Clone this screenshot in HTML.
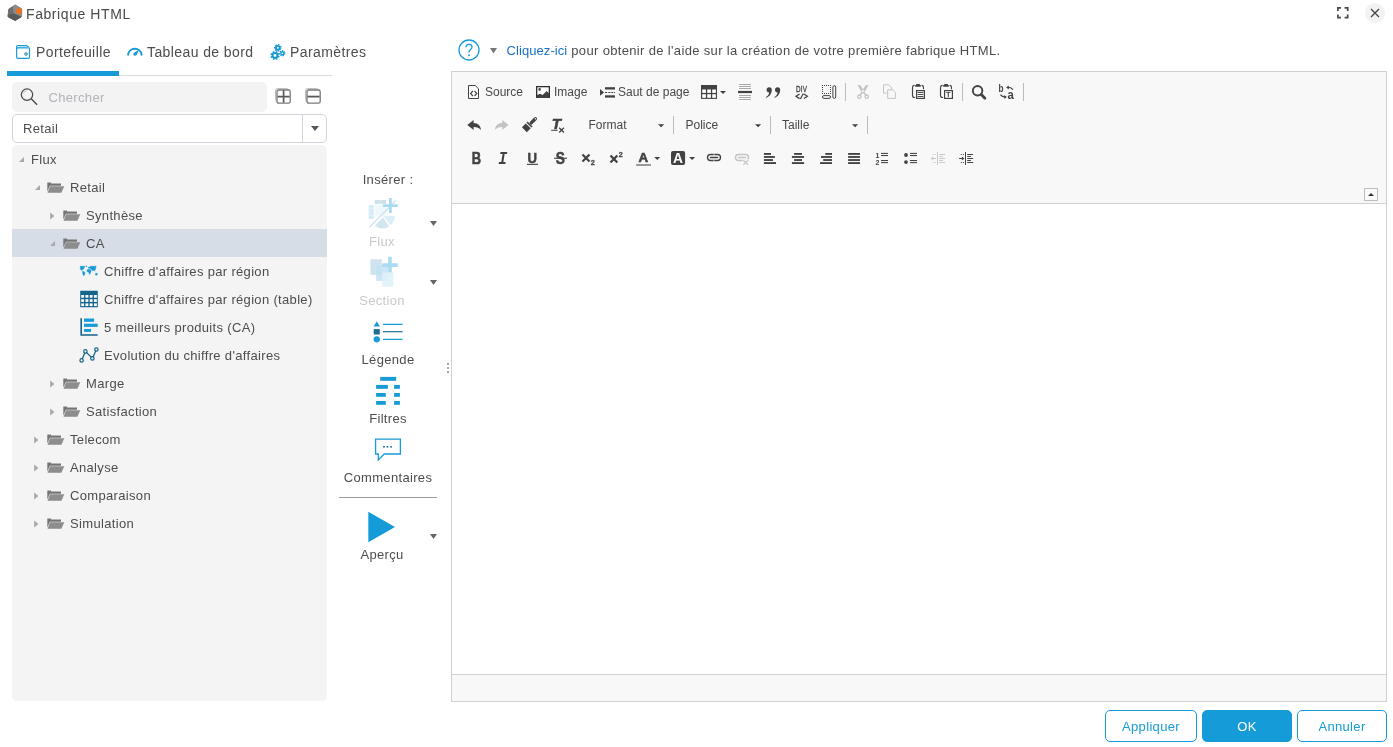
<!DOCTYPE html>
<html lang="fr">
<head>
<meta charset="utf-8">
<title>Fabrique HTML</title>
<style>
*{box-sizing:border-box;margin:0;padding:0}
html,body{width:1393px;height:747px;overflow:hidden;background:#fff}
body{position:relative;font-family:"Liberation Sans",sans-serif;font-size:13px;color:#4d4d4d;letter-spacing:.33px}
#app{position:absolute;left:0;top:0;width:1393px;height:747px;will-change:transform}
.abs{position:absolute}
svg{position:absolute;overflow:visible}
.t{position:absolute;white-space:nowrap;line-height:16px}
/* title */
#title{left:26px;top:6px;font-size:14px;letter-spacing:.58px;color:#4a4a4a}
/* tabs */
.tab{font-size:14px;letter-spacing:.4px;top:44px;color:#4d4d4d}
#tabbar{left:7px;top:71px;width:112px;height:5px;background:#159bd7}
#tabline{left:119px;top:75px;width:213px;height:1px;background:#dcdcdc}
/* search */
#search{left:12px;top:82px;width:255px;height:30px;background:#f3f3f3;border-radius:5px}
#combo{left:12px;top:114px;width:315px;height:29px;border:1px solid #d1d4da;border-radius:5px;background:#fff}
#combo i{position:absolute;left:289px;top:0;width:1px;height:27px;background:#d1d4da}
#combo b{position:absolute;left:298px;top:11px;border:4px solid transparent;border-top:5px solid #555;border-bottom:0}
/* tree */
#tree{left:12px;top:145px;width:315px;height:556px;background:#f4f4f4;border-radius:5px}
#sel{left:12px;top:229px;width:315px;height:28px;background:#d6dde7}
.row{position:absolute;white-space:nowrap;line-height:16px;height:16px;color:#4d4d4d}
.ar{position:absolute;width:0;height:0}
.ar.c{border:3.5px solid transparent;border-left:5px solid #a9a9a9;border-right:0}
.ar.o{border:3px solid transparent;border-right-color:#a9a9a9;border-bottom-color:#a9a9a9}
/* insert */
.ins{position:absolute;white-space:nowrap;line-height:16px;text-align:center;width:120px;left:328px}
.dd{position:absolute;border:4px solid transparent;border-top:5px solid #666;border-bottom:0}
/* editor */
#ed{left:451px;top:71px;width:936px;height:631px;border:1px solid #d1d1d1;background:#fff}
#tb{left:0;top:0;width:934px;height:132px;background:#f8f8f8;border-bottom:1px solid #d1d1d1}
#bb{left:0;top:602px;width:934px;height:27px;background:#f8f8f8;border-top:1px solid #d1d1d1}
.ck{position:absolute;font-size:12px;letter-spacing:0;color:#484848;line-height:14px;white-space:nowrap}
.sep{position:absolute;width:1px;height:16px;background:#bcbcbc}
.cdd{position:absolute;border:3px solid transparent;border-top:3px solid #484848;border-bottom:0}
/* buttons */
.btn{position:absolute;top:710px;height:32px;border:1px solid #159bd7;border-radius:5px;color:#159bd7;font-size:13px;letter-spacing:.33px;text-align:center;line-height:30px;padding-top:1px;background:#fff}
</style>
</head>
<body>
<div id="app">
<!-- TITLE -->
<svg style="left:7px;top:4px" width="16" height="17" viewBox="7 4 16 17">
<path d="M15.2 5.100L21.500 8.900V16.400L15.200 20.400L8 16.500L8.800 9.100Z" fill="#6d6e70" stroke="#6d6e70" stroke-width="1" stroke-linejoin="round"/>
<path d="M13.300 6.200L15.200 5L21.600 8.900V16.400L21 17L14 13.800Z" fill="#8b8d8f" stroke="#8b8d8f" stroke-width=".8" stroke-linejoin="round"/>
<path d="M8 15.400L14 13.800L21.100 17L15.200 20.500L8.300 17Z" fill="#595a5c" stroke="#595a5c" stroke-width=".8" stroke-linejoin="round"/>
<path d="M19.200 7.900L21.800 9.400V12.600L19.200 14.200L16.400 12.600V9.400Z" fill="#f07122" stroke="#f07122" stroke-width=".6" stroke-linejoin="round"/>
</svg>
<svg style="left:1336px;top:6px" width="14" height="14" viewBox="0 0 14 14">
<path d="M1.900 5V1.900H5M8.600 1.900H11.700V5M11.700 8.500V11.600H8.600M5 11.600H1.900V8.500" fill="none" stroke="#4a4a4a" stroke-width="1.700"/>
</svg>
<div class="abs" style="left:1365px;top:3px;width:20px;height:20px;border-radius:10px;background:#f2f2f2"></div>
<svg style="left:1365px;top:3px" width="20" height="20" viewBox="0 0 20 20">
<path d="M6 6L14 14M14 6L6 14" fill="none" stroke="#444" stroke-width="1.300"/>
</svg>

<div class="t" id="title">Fabrique HTML</div>

<!-- TABS -->
<svg style="left:15px;top:44px" width="16" height="16" viewBox="15 44 16 16">
<path d="M17 48.900q.2-1.700 2-1.700h8.300l1.500 1.700z" fill="#8fd3f0"/>
<path d="M17.700 45.500h8.300q.9 0 1.500.7l1.400 1.500q.6.600.6 1.500v8q0 1.100-1.100 1.100h-10.700q-1.100 0-1.100-1.100v-10.600q0-1.100 1.100-1.100z" fill="none" stroke="#189ad6" stroke-width="1.150"/>
<path d="M16.800 49.200q.2-2 2.200-2h8.700" fill="none" stroke="#189ad6" stroke-width="1"/>
<circle cx="26" cy="54" r="1.300" fill="#cfe6f2" stroke="#2b87b3" stroke-width="1"/>
</svg>
<svg style="left:126px;top:46px" width="18" height="12" viewBox="126 46 18 12">
<path d="M128.100 54.700A6.800 6.800 0 0 1 141.600 54.700" fill="none" stroke="#189ad6" stroke-width="2" stroke-linecap="round"/>
<path d="M139.200 49.500L136.800 54.500Q135.700 56.200 134.100 55.400Q132.700 54.400 133.700 52.900Z" fill="#189ad6"/>
</svg>
<svg style="left:269px;top:43px" width="18" height="18" viewBox="269 43 18 18">
<circle cx="277.8" cy="47.8" r="1.95" fill="none" stroke="#189ad6" stroke-width="1.80"/><circle cx="277.8" cy="47.8" r="3.15" fill="none" stroke="#189ad6" stroke-width="1.40" stroke-dasharray="1.470 1.357" transform="rotate(10 277.8 47.8)"/><circle cx="275" cy="55.5" r="2.45" fill="none" stroke="#189ad6" stroke-width="2.00"/><circle cx="275" cy="55.5" r="3.83" fill="none" stroke="#189ad6" stroke-width="1.55" stroke-dasharray="1.562 1.442" transform="rotate(5 275 55.5)"/><circle cx="282.3" cy="53.25" r="1.55" fill="none" stroke="#189ad6" stroke-width="1.40"/><circle cx="282.3" cy="53.25" r="2.52" fill="none" stroke="#189ad6" stroke-width="1.35" stroke-dasharray="1.179 1.088" transform="rotate(0 282.3 53.25)"/>
</svg>

<div class="t tab" style="left:36px">Portefeuille</div>
<div class="t tab" style="left:147px">Tableau de bord</div>
<div class="t tab" style="left:290px">Paramètres</div>
<div class="abs" id="tabline"></div>
<div class="abs" id="tabbar"></div>

<!-- SEARCH -->
<div class="abs" id="search"></div>
<div class="t" style="left:48.500px;top:90px;color:#b3b3ba">Chercher</div>
<div class="abs" id="combo"><i></i><b></b></div>
<div class="t" style="left:23px;top:121px">Retail</div>

<svg style="left:20px;top:87px" width="19" height="19" viewBox="20 87 19 19">
<circle cx="27" cy="94.600" r="5.700" fill="none" stroke="#4a4a4a" stroke-width="1.250"/>
<path d="M31.200 98.700L37.100 104.700" stroke="#4a4a4a" stroke-width="1.400" fill="none"/>
<path d="M23.300 93.500A4 4 0 0 1 26.300 90.700" stroke="#b5b5b5" stroke-width=".8" fill="none"/>
</svg>
<svg style="left:275px;top:88px" width="16" height="16" viewBox="0 0 16 16">
<rect x=".6" y=".6" width="12.800" height="12.800" rx="1.800" fill="#e9e9e9" stroke="#b9b9b9" stroke-width="1"/>
<rect x="2" y="2" width="13.200" height="13.200" rx="1.800" fill="#fdfdfd" stroke="#7a7a7a" stroke-width="1.300"/>
<path d="M2.600 8.600H14.600M8.600 2.600V14.600" stroke="#585858" stroke-width="1.700" fill="none"/>
</svg>
<svg style="left:305px;top:88px" width="16" height="16" viewBox="0 0 16 16">
<rect x=".6" y=".6" width="12.800" height="12.800" rx="1.800" fill="#e9e9e9" stroke="#b9b9b9" stroke-width="1"/>
<rect x="2" y="2" width="13.200" height="13.200" rx="1.800" fill="#fdfdfd" stroke="#7a7a7a" stroke-width="1.300"/>
<path d="M2.600 8.600H14.600" stroke="#585858" stroke-width="1.800" fill="none"/>
</svg>

<!-- TREE -->
<div class="abs" id="tree"></div>
<div class="abs" id="sel"></div>
<div id="rows">
<svg style="left:19px;top:157.0px" width="5" height="5" viewBox="0 0 5 5"><path d="M5 0V5H0z" fill="#a8a8a8"/></svg>
<div class="row" style="left:31px;top:152px">Flux</div>
<svg style="left:35px;top:185.0px" width="5" height="5" viewBox="0 0 5 5"><path d="M5 0V5H0z" fill="#a8a8a8"/></svg>
<svg style="left:47.3px;top:182.0px" width="18" height="11" viewBox="0 0 18 11"><path d="M0.3 0.4h3.4l0.7 1.1h9.6v2.3H2.9L0.3 9.6z" fill="#767676"/><path d="M3.1 4.2h14.2l-2.9 6.6H0.5z" fill="#8d8d8d"/></svg>
<div class="row" style="left:70px;top:180px">Retail</div>
<svg style="left:50px;top:211.5px" width="5" height="8" viewBox="0 0 5 8"><path d="M0.2 0.4L4.4 4L0.2 7.6z" fill="#a8a8a8"/></svg>
<svg style="left:63.3px;top:210.0px" width="18" height="11" viewBox="0 0 18 11"><path d="M0.3 0.4h3.4l0.7 1.1h9.6v2.3H2.9L0.3 9.6z" fill="#767676"/><path d="M3.1 4.2h14.2l-2.9 6.6H0.5z" fill="#8d8d8d"/></svg>
<div class="row" style="left:86px;top:208px">Synthèse</div>
<svg style="left:50px;top:241.0px" width="5" height="5" viewBox="0 0 5 5"><path d="M5 0V5H0z" fill="#a8a8a8"/></svg>
<svg style="left:63.3px;top:238.0px" width="18" height="11" viewBox="0 0 18 11"><path d="M0.3 0.4h3.4l0.7 1.1h9.6v2.3H2.9L0.3 9.6z" fill="#767676"/><path d="M3.1 4.2h14.2l-2.9 6.6H0.5z" fill="#8d8d8d"/></svg>
<div class="row" style="left:86px;top:236px">CA</div>
<svg style="left:79px;top:264px" width="20" height="14" viewBox="79 264 20 14"><g fill="#189ad6" stroke="#189ad6" stroke-width=".5" stroke-linejoin="round"><path d="M80.200 266.300L84.700 266.300L83.900 268.500L81.900 270.500L80.500 269.300Z"/><circle cx="86.300" cy="266.300" r=".5"/><path d="M82.400 271.600L83.900 271.400L85.200 273L83.900 275.700L83.200 275.200Z"/><path d="M87.900 267.700L91 266.300L96.200 266.300L95 270.400L92 270.200L90.700 268.800Z"/><path d="M87 270L88.400 269.200L90.900 270L90.900 272.100L89.500 274.500L88.700 272.100L87 271.500Z"/><path d="M94.900 274.300L97.100 273.100L97.300 274.900L96.300 275.200Z"/><path d="M94.600 271.300L96.400 272.600" stroke="#a8d8ef" stroke-width=".9"/></g></svg>
<div class="row" style="left:104px;top:264px">Chiffre d'affaires par région</div>
<svg style="left:79px;top:289px" width="20" height="20" viewBox="79 289 20 20"><rect x="80.200" y="290.700" width="17.600" height="16.600" rx=".6" fill="#15648c"/><rect x="81.20" y="295.00" width="2.900" height="2.700" fill="#fff"/><rect x="85.45" y="295.00" width="2.900" height="2.700" fill="#fff"/><rect x="89.70" y="295.00" width="2.900" height="2.700" fill="#fff"/><rect x="93.95" y="295.00" width="2.900" height="2.700" fill="#fff"/><rect x="81.20" y="299.20" width="2.900" height="2.700" fill="#fff"/><rect x="85.45" y="299.20" width="2.900" height="2.700" fill="#fff"/><rect x="89.70" y="299.20" width="2.900" height="2.700" fill="#fff"/><rect x="93.95" y="299.20" width="2.900" height="2.700" fill="#fff"/><rect x="81.20" y="303.40" width="2.900" height="2.700" fill="#fff"/><rect x="85.45" y="303.40" width="2.900" height="2.700" fill="#fff"/><rect x="89.70" y="303.40" width="2.900" height="2.700" fill="#fff"/><rect x="93.95" y="303.40" width="2.900" height="2.700" fill="#fff"/></svg>
<div class="row" style="left:104px;top:292px">Chiffre d'affaires par région (table)</div>
<svg style="left:79px;top:317px" width="20" height="20" viewBox="79 317 20 20"><path d="M81.200 318.200V335H97.700" fill="none" stroke="#15648c" stroke-width="1.600"/><rect x="84" y="318.500" width="10.100" height="3.300" fill="#159bd7"/><rect x="84" y="323.700" width="13.700" height="3.200" fill="#159bd7"/><rect x="84" y="329" width="7" height="2.900" fill="#159bd7"/></svg>
<div class="row" style="left:104px;top:320px">5 meilleurs produits (CA)</div>
<svg style="left:79px;top:346px" width="20" height="18" viewBox="79 346 20 18"><path d="M81.600 360.400L85.400 351.400L92.400 358.400L96.400 349.500" fill="none" stroke="#15648c" stroke-width="1.250"/><g fill="#f4f4f4" stroke="#15648c" stroke-width="1.200"><circle cx="81.600" cy="360.400" r="1.700"/><circle cx="85.400" cy="351.400" r="1.700"/><circle cx="92.400" cy="358.400" r="1.700"/><circle cx="96.400" cy="349.500" r="1.700"/></g></svg>
<div class="row" style="left:104px;top:348px">Evolution du chiffre d'affaires</div>
<svg style="left:50px;top:379.5px" width="5" height="8" viewBox="0 0 5 8"><path d="M0.2 0.4L4.4 4L0.2 7.6z" fill="#a8a8a8"/></svg>
<svg style="left:63.3px;top:378.0px" width="18" height="11" viewBox="0 0 18 11"><path d="M0.3 0.4h3.4l0.7 1.1h9.6v2.3H2.9L0.3 9.6z" fill="#767676"/><path d="M3.1 4.2h14.2l-2.9 6.6H0.5z" fill="#8d8d8d"/></svg>
<div class="row" style="left:86px;top:376px">Marge</div>
<svg style="left:50px;top:407.5px" width="5" height="8" viewBox="0 0 5 8"><path d="M0.2 0.4L4.4 4L0.2 7.6z" fill="#a8a8a8"/></svg>
<svg style="left:63.3px;top:406.0px" width="18" height="11" viewBox="0 0 18 11"><path d="M0.3 0.4h3.4l0.7 1.1h9.6v2.3H2.9L0.3 9.6z" fill="#767676"/><path d="M3.1 4.2h14.2l-2.9 6.6H0.5z" fill="#8d8d8d"/></svg>
<div class="row" style="left:86px;top:404px">Satisfaction</div>
<svg style="left:34px;top:435.5px" width="5" height="8" viewBox="0 0 5 8"><path d="M0.2 0.4L4.4 4L0.2 7.6z" fill="#a8a8a8"/></svg>
<svg style="left:47.3px;top:434.0px" width="18" height="11" viewBox="0 0 18 11"><path d="M0.3 0.4h3.4l0.7 1.1h9.6v2.3H2.9L0.3 9.6z" fill="#767676"/><path d="M3.1 4.2h14.2l-2.9 6.6H0.5z" fill="#8d8d8d"/></svg>
<div class="row" style="left:70px;top:432px">Telecom</div>
<svg style="left:34px;top:463.5px" width="5" height="8" viewBox="0 0 5 8"><path d="M0.2 0.4L4.4 4L0.2 7.6z" fill="#a8a8a8"/></svg>
<svg style="left:47.3px;top:462.0px" width="18" height="11" viewBox="0 0 18 11"><path d="M0.3 0.4h3.4l0.7 1.1h9.6v2.3H2.9L0.3 9.6z" fill="#767676"/><path d="M3.1 4.2h14.2l-2.9 6.6H0.5z" fill="#8d8d8d"/></svg>
<div class="row" style="left:70px;top:460px">Analyse</div>
<svg style="left:34px;top:491.5px" width="5" height="8" viewBox="0 0 5 8"><path d="M0.2 0.4L4.4 4L0.2 7.6z" fill="#a8a8a8"/></svg>
<svg style="left:47.3px;top:490.0px" width="18" height="11" viewBox="0 0 18 11"><path d="M0.3 0.4h3.4l0.7 1.1h9.6v2.3H2.9L0.3 9.6z" fill="#767676"/><path d="M3.1 4.2h14.2l-2.9 6.6H0.5z" fill="#8d8d8d"/></svg>
<div class="row" style="left:70px;top:488px">Comparaison</div>
<svg style="left:34px;top:519.5px" width="5" height="8" viewBox="0 0 5 8"><path d="M0.2 0.4L4.4 4L0.2 7.6z" fill="#a8a8a8"/></svg>
<svg style="left:47.3px;top:518.0px" width="18" height="11" viewBox="0 0 18 11"><path d="M0.3 0.4h3.4l0.7 1.1h9.6v2.3H2.9L0.3 9.6z" fill="#767676"/><path d="M3.1 4.2h14.2l-2.9 6.6H0.5z" fill="#8d8d8d"/></svg>
<div class="row" style="left:70px;top:516px">Simulation</div>
</div>

<!-- INSERT -->
<div class="ins" style="top:172px">Insérer :</div>
<!-- Flux icon (disabled) -->
<svg style="left:366px;top:196px" width="34" height="34" viewBox="366 196 34 34">
<rect x="368.700" y="205.100" width="5.100" height="13.800" fill="#d5ecf8"/>
<path d="M368.700 208.500h5.100M368.700 212h5.100M368.700 215.500h5.100" stroke="#eaf5fb" stroke-width=".7"/>
<rect x="374.600" y="200" width="11.500" height="3.800" fill="#cfe0ec"/>
<path d="M380.400 200v3.800" stroke="#e4eef5" stroke-width=".7"/>
<rect x="374.600" y="204.600" width="11.500" height="12" fill="#f1f8fc"/>
<path d="M383.500 216.500L394.600 215.800A11 11 0 0 1 390.600 225.200Z" fill="#d9eef9"/>
<path d="M382.800 217.200L389.200 226.200A11 11 0 0 1 375 225.400Z" fill="#d3e5f0"/>
<path d="M369.300 227.400L395.800 200.500" stroke="#c5dfee" stroke-width="1.100" fill="none"/>
<path d="M390.400 198v14.900M382.900 205.650h14.900" stroke="#a9dbf2" stroke-width="2.800" fill="none"/>
</svg>
<div class="ins" style="top:234px;color:#c9c9c9;left:322px">Flux</div>
<svg style="left:430px;top:221px" width="7" height="5" viewBox="0 0 7 5"><path d="M0 0H7L3.500 5Z" fill="#666"/></svg>
<!-- Section icon (disabled) -->
<svg style="left:370px;top:256px" width="28" height="31" viewBox="370 256 28 31">
<rect x="370.400" y="259.300" width="11.300" height="15.600" fill="#cfe3ef"/>
<rect x="376.200" y="265.300" width="11.900" height="15.600" fill="#c2e2f3" fill-opacity=".85"/>
<rect x="382.200" y="272.500" width="11.200" height="14.200" fill="#e1f1fa" fill-opacity=".9"/>
<path d="M389.950 256.800v15.700M382.200 265.100h15.600" stroke="#a9dbf2" stroke-width="3.600" fill="none"/>
</svg>
<div class="ins" style="top:293px;color:#c9c9c9;left:322px">Section</div>
<svg style="left:430px;top:280px" width="7" height="5" viewBox="0 0 7 5"><path d="M0 0H7L3.500 5Z" fill="#666"/></svg>
<!-- Legende -->
<svg style="left:373px;top:320px" width="30" height="24" viewBox="373 320 30 24">
<path d="M376.750 321.300L379.900 326.500H373.600Z" fill="#189ad6"/>
<rect x="373.700" y="329.100" width="6.100" height="5.400" fill="#1e6e93"/>
<circle cx="376.750" cy="339.300" r="3.150" fill="#189ad6"/>
<path d="M383 324.300h19.600M383 339.300h19.600" stroke="#189ad6" stroke-width="1.200"/>
<path d="M383 331.700h19.600" stroke="#1e6e93" stroke-width="1.200"/>
</svg>
<div class="ins" style="top:352px">Légende</div>
<!-- Filtres -->
<svg style="left:376px;top:376px" width="24" height="30" viewBox="376 376 24 30">
<g fill="#189ad6">
<rect x="380.200" y="376.900" width="16" height="3.900"/>
<rect x="376.100" y="384.900" width="11.800" height="3.900"/><rect x="394.100" y="384.900" width="5.800" height="3.900"/>
<rect x="376.100" y="393" width="9.700" height="3.800"/><rect x="394.100" y="393" width="5.800" height="3.800"/>
<rect x="376.100" y="401" width="9.700" height="3.800"/><rect x="394.100" y="401" width="5.800" height="3.800"/>
</g>
</svg>
<div class="ins" style="top:411px">Filtres</div>
<!-- Commentaires -->
<svg style="left:374px;top:437px" width="28" height="26" viewBox="374 437 28 26">
<path d="M375.600 439.200h24.800v14.800h-16.200l-5.900 5.900v-5.900h-2.700z" fill="#fff" stroke="#189ad6" stroke-width="1.300" stroke-linejoin="miter"/>
<g fill="#1e6e93"><rect x="383.100" y="446" width="1.700" height="1.600"/><rect x="386.600" y="446" width="1.700" height="1.600"/><rect x="390.200" y="446" width="1.700" height="1.600"/></g>
</svg>
<div class="ins" style="top:470px">Commentaires</div>
<div class="abs" style="left:339px;top:497px;width:98px;height:1px;background:#9a9a9a"></div>
<!-- Apercu -->
<svg style="left:368px;top:511px" width="28" height="32" viewBox="368 511 28 32"><path d="M368.300 511.700L395 527L368.300 542.300Z" fill="#159bd7"/></svg>
<div class="ins" style="top:547px;left:322px">Aperçu</div>
<svg style="left:430px;top:534px" width="7" height="5" viewBox="0 0 7 5"><path d="M0 0H7L3.500 5Z" fill="#666"/></svg>
<!-- splitter -->
<div class="abs" style="left:446.500px;top:363px;width:2px;height:2px;background:#a0a0a0"></div>
<div class="abs" style="left:446.500px;top:367px;width:2px;height:2px;background:#a0a0a0"></div>
<div class="abs" style="left:446.500px;top:371px;width:2px;height:2px;background:#a0a0a0"></div>


<!-- HELP -->
<svg style="left:458px;top:39px" width="22" height="22" viewBox="0 0 22 22">
<circle cx="11" cy="11" r="10" fill="none" stroke="#189ad6" stroke-width="1.300"/>
<path d="M7.900 8.300Q8 5.400 11 5.400Q14 5.400 14 8Q14 9.600 12.300 10.700Q11 11.600 11 13.400" fill="none" stroke="#189ad6" stroke-width="1.300"/>
<circle cx="11" cy="16.200" r=".95" fill="#189ad6"/>
</svg>
<svg style="left:490px;top:47.500px" width="7" height="6" viewBox="0 0 7 6"><path d="M0 0H7L3.500 5.500Z" fill="#777"/></svg>
<div class="t" style="left:506.500px;top:43px;letter-spacing:.34px"><span style="color:#1a70c8;letter-spacing:.08px">Cliquez-ici</span> pour obtenir de l'aide sur la création de votre première fabrique HTML.</div>


<!-- EDITOR -->
<div class="abs" id="ed">
<div class="abs" id="tb"></div>
<div class="abs" id="bb"></div>
</div>

<!-- CKEDITOR TOOLBAR -->
<div class="ck" style="left:485px;top:85px">Source</div>
<div class="ck" style="left:554px;top:85px">Image</div>
<div class="ck" style="left:618px;top:85px">Saut de page</div>
<div class="ck" style="left:588.5px;top:118px">Format</div>
<div class="ck" style="left:685.5px;top:118px">Police</div>
<div class="ck" style="left:782px;top:118px">Taille</div>
<div class="sep" style="left:845px;top:83px;height:18px"></div>
<div class="sep" style="left:962px;top:83px;height:18px"></div>
<div class="sep" style="left:1023px;top:83px;height:18px"></div>
<div class="sep" style="left:673px;top:116px;height:18px"></div>
<div class="sep" style="left:770px;top:116px;height:18px"></div>
<div class="sep" style="left:867px;top:116px;height:18px"></div>
<div class="abs" style="left:1364px;top:188px;width:14px;height:13px;border:1px solid #bdbdbd;background:#fafafa"></div>
<svg style="left:452px;top:72px" width="934" height="131" viewBox="452 72 934 131" font-family="Liberation Sans, sans-serif">
<path d="M1368 196L1371 193L1374 196Z" fill="#333"/>
<path d="M468.500 85.500h6.700l3.300 3.300v9.700h-10z" fill="#fff" stroke="#424242" stroke-width="1"/>
<path d="M472.900 91L470.600 93.500L472.900 96M474.500 91L476.800 93.500L474.500 96" fill="none" stroke="#424242" stroke-width="1.150"/>
<rect x="536.650" y="86.650" width="12.700" height="10.600" fill="#fff" stroke="#2e2e2e" stroke-width="1.300"/>
<path d="M537 97V95L540.200 93.700L542.600 95.100L546.700 91L549 93.600V97Z" fill="#424242"/><circle cx="539.600" cy="89.400" r="1.300" fill="#424242"/>
<path d="M600 89L604.100 92.400L600 95.800Z" fill="#424242"/><rect x="605" y="87.200" width="10" height="2.300" fill="#424242"/><rect x="605" y="95.300" width="10" height="2.300" fill="#424242"/>
<path d="M605 92.500h2.200M608.300 92.500h2.100M611.300 92.500h1.800M613.900 92.500h1.100" stroke="#424242" stroke-width="1.200"/>
<rect x="701" y="85" width="16" height="13.900" fill="#424242"/>
<rect x="702.2" y="89.5" width="3.700" height="3.4" fill="#fff"/>
<rect x="702.2" y="94.2" width="3.700" height="3.6" fill="#fff"/>
<rect x="707.2" y="89.5" width="3.700" height="3.4" fill="#fff"/>
<rect x="707.2" y="94.2" width="3.700" height="3.6" fill="#fff"/>
<rect x="712.2" y="89.5" width="3.700" height="3.4" fill="#fff"/>
<rect x="712.2" y="94.2" width="3.700" height="3.6" fill="#fff"/>
<path d="M720 90.900h6l-3 3z" fill="#424242"/>
<rect x="739" y="84.1" width="12" height=".85" fill="#9a9a9a"/>
<rect x="739" y="86.1" width="12" height=".85" fill="#9a9a9a"/>
<rect x="739" y="88.1" width="12" height=".85" fill="#9a9a9a"/>
<rect x="739" y="95.1" width="12" height=".85" fill="#9a9a9a"/>
<rect x="739" y="97.1" width="12" height=".85" fill="#9a9a9a"/>
<rect x="739" y="99.1" width="12" height=".85" fill="#9a9a9a"/>
<rect x="738" y="90.900" width="14" height="2.200" fill="#424242"/>
<path d="M771.8 89.800C771.8 93.500 769.6 96.500 766.2 97.800L765.9 97.100C768.0 95.800 769.0 94.200 769.2 92.400A2.600 2.600 0 1 1 771.8 89.800Z" fill="#424242"/>
<path d="M780.2 89.800C780.2 93.500 778.0 96.500 774.6 97.800L774.3 97.100C776.4 95.800 777.4 94.200 777.6 92.400A2.600 2.600 0 1 1 780.2 89.800Z" fill="#424242"/>
<text x="796" y="91.600" font-size="9.600" stroke="#424242" stroke-width=".35" textLength="11.200" lengthAdjust="spacingAndGlyphs" fill="#424242">DIV</text>
<path d="M799.600 94L796 96.300L799.600 98.600M803.300 93.500L800.400 99M803.900 94L807.400 96.300L803.900 98.600" fill="none" stroke="#424242" stroke-width="1.250"/>
<path d="M822 85.500h9M822 93.500h9M822.500 85v9M830.500 85v9" fill="none" stroke="#424242" stroke-width="1" stroke-dasharray="1 1"/>
<rect x="822.500" y="95.600" width="8" height="2.800" rx="1.400" fill="none" stroke="#424242" stroke-width="1"/>
<rect x="832.900" y="85.700" width="2.800" height="12.700" rx="1.400" fill="none" stroke="#424242" stroke-width="1"/>
<path d="M857.600 85.100L860.300 85.200L864.800 92L862 93.300ZM868.400 85.100L865.700 85.200L861.200 92L864 93.300Z" fill="#c3c3c3"/><path d="M863.400 92L866.300 95.500M862.600 92L859.700 95.500" stroke="#c3c3c3" stroke-width="1.500" fill="none"/>
<circle cx="859.300" cy="96.800" r="1.650" fill="none" stroke="#c3c3c3" stroke-width="1.250"/><circle cx="866.700" cy="96.800" r="1.650" fill="none" stroke="#c3c3c3" stroke-width="1.250"/>
<path d="M886.600 93.100h-3.100v-8.300h5.200l3.100 3.100v1.600" fill="none" stroke="#c3c3c3" stroke-width="1"/>
<path d="M887.700 89.800h5l2.700 2.700v5.900h-7.700z" fill="none" stroke="#c3c3c3" stroke-width="1"/>
<path d="M914.2 85.400Q912.5 85.600 912.5 87.500V95.400Q912.5 97.300 914.7 97.500M922.0 85.400Q923.5 85.700 923.5 87.500V88.700" fill="none" stroke="#424242" stroke-width="1.150" stroke-linecap="round"/>
<rect x="916.2" y="84" width="3.700" height="1.600" rx=".3" fill="#424242"/><rect x="915.1" y="85.100" width="5.700" height="1.750" rx=".4" fill="#424242"/>
<rect x="916.6" y="90.600" width="7.800" height="7.800" fill="#fff" stroke="#424242" stroke-width="1.200"/>
<path d="M942.2 85.400Q940.5 85.600 940.5 87.500V95.400Q940.5 97.300 942.7 97.500M950.0 85.400Q951.5 85.700 951.5 87.500V88.700" fill="none" stroke="#424242" stroke-width="1.150" stroke-linecap="round"/>
<rect x="944.2" y="84" width="3.700" height="1.600" rx=".3" fill="#424242"/><rect x="943.1" y="85.100" width="5.700" height="1.750" rx=".4" fill="#424242"/>
<rect x="944.6" y="90.600" width="7.800" height="7.800" fill="#fff" stroke="#424242" stroke-width="1.200"/>
<path d="M918 92.500h5M918 94.500h5M918 96.500h5" stroke="#424242" stroke-width=".95" stroke-linecap="round"/>
<text x="946" y="97" font-size="6.500" font-weight="bold" textLength="5" lengthAdjust="spacingAndGlyphs" fill="#424242">T</text>
<circle cx="977.600" cy="90.800" r="4.750" fill="none" stroke="#424242" stroke-width="1.900"/><path d="M981.300 94.600L984.900 98.200" stroke="#424242" stroke-width="2.800" stroke-linecap="round"/>
<text x="998.500" y="91.500" font-size="10" font-weight="bold" textLength="5.300" lengthAdjust="spacingAndGlyphs" fill="#424242">b</text>
<text x="1007.600" y="99.300" font-size="13.500" font-weight="bold" textLength="6.600" lengthAdjust="spacingAndGlyphs" fill="#424242">a</text>
<path d="M1013 89.600Q1011 87.300 1007.500 87.300" fill="none" stroke="#424242" stroke-width="1.100"/><path d="M1008.800 85.400L1006.200 87.400L1008.800 89.400Z" fill="#424242"/>
<path d="M1000.400 94.600Q1002 96.900 1005 96.900" fill="none" stroke="#424242" stroke-width="1.100"/><path d="M1004.300 95L1006.900 97L1004.300 99Z" fill="#424242"/>
<path d="M467.3 124.900L473.6 119.900V122.900Q480.3 123 481.1 130.100Q478.2 126.800 473.6 127V130.100Z" fill="#424242"/>
<path d="M508.49999999999994 124.900L502.19999999999993 119.900V122.900Q495.49999999999994 123 494.69999999999993 130.100Q497.59999999999997 126.800 502.19999999999993 127V130.100Z" fill="#c3c3c3"/>
<g transform="translate(528.900 125.200) rotate(45)" fill="#424242"><rect x="-1.650" y="-10.800" width="3.300" height="9.200" rx="1.650"/><circle cx="0" cy="-9.100" r=".7" fill="#f8f8f8"/><rect x="-3.450" y="-1.700" width="6.900" height="1.600"/><rect x="-3.450" y=".9" width="6.900" height="5.500"/></g>
<text x="551.700" y="128.800" font-size="14" font-weight="bold" font-style="italic" stroke="#424242" stroke-width=".5" textLength="9.600" lengthAdjust="spacingAndGlyphs" fill="#424242">T</text>
<path d="M551.200 130.300h6.400" stroke="#424242" stroke-width="1"/><path d="M559.200 127.800L563.900 132.500M563.900 127.800L559.200 132.500" stroke="#424242" stroke-width="1.300" fill="none"/>
<path d="M658 124.200h6.200l-3.100 3.100z" fill="#424242"/>
<path d="M755 124.200h6.200l-3.100 3.100z" fill="#424242"/>
<path d="M852 124.200h6.200l-3.100 3.100z" fill="#424242"/>
<text x="471.700" y="163.800" font-size="16.200" font-weight="bold" stroke="#424242" stroke-width=".55" textLength="9.600" lengthAdjust="spacingAndGlyphs" fill="#424242">B</text>
<text x="498.300" y="163.800" font-size="17.600" font-weight="bold" font-style="italic" font-family="Liberation Mono, monospace" textLength="9.300" lengthAdjust="spacingAndGlyphs" fill="#424242">I</text>
<text x="527.600" y="162.700" font-size="14.800" font-weight="bold" stroke="#424242" stroke-width=".5" textLength="9.800" lengthAdjust="spacingAndGlyphs" fill="#424242">U</text>
<rect x="527" y="163.800" width="11" height="1.100" fill="#424242"/>
<text x="555.700" y="163.700" font-size="16" font-weight="bold" stroke="#424242" stroke-width=".5" textLength="9.400" lengthAdjust="spacingAndGlyphs" fill="#424242">S</text>
<rect x="554" y="157.700" width="13" height="1.100" fill="#424242"/>
<path d="M582.500 154.500L589.500 161.500M589.500 154.500L582.500 161.500" stroke="#424242" stroke-width="2.200" fill="none"/>
<text x="590.700" y="164.900" font-size="7.400" font-weight="bold" stroke="#424242" stroke-width=".3" fill="#424242">2</text>
<path d="M610.500 155.400L617.300 162.400M617.300 155.400L610.500 162.400" stroke="#424242" stroke-width="2.200" fill="none"/>
<text x="618.700" y="157" font-size="7.200" font-weight="bold" stroke="#424242" stroke-width=".3" fill="#424242">2</text>
<text x="643.500" y="161.700" font-size="13.300" font-weight="bold" text-anchor="middle" stroke="#424242" stroke-width=".6" fill="#424242">A</text>
<rect x="636.200" y="164" width="14.800" height="2" fill="#999"/>
<path d="M654.200 156.900h6l-3 3z" fill="#424242"/>
<rect x="671" y="151.100" width="14.100" height="13.800" rx="2" fill="#424242"/>
<text x="678.100" y="163" font-size="13.800" font-weight="bold" text-anchor="middle" fill="#fff">A</text>
<path d="M689.100 156.900h6l-3 3z" fill="#424242"/>
<rect x="707.5" y="154.500" width="13" height="6" rx="3" fill="none" stroke="#424242" stroke-width="1.350"/><path d="M710.4 157.500h7.200" stroke="#424242" stroke-width="1.300" stroke-linecap="round"/>
<path d="M714 153.600v1.700M714 159.700v1.700" stroke="#f8f8f8" stroke-width=".7"/>
<rect x="735.5" y="154.500" width="13" height="6" rx="3" fill="none" stroke="#c3c3c3" stroke-width="1.350"/><path d="M738.4 157.500h7.200" stroke="#c3c3c3" stroke-width="1.300" stroke-linecap="round"/>
<rect x="742.500" y="159.300" width="7" height="6" fill="#f8f8f8"/>
<path d="M743.300 160.200L748.200 164.900M748.200 160.200L743.300 164.900" stroke="#c3c3c3" stroke-width="1.200" fill="none"/>
<rect x="763.9" y="153" width="7.1" height="1.850" fill="#424242"/>
<rect x="763.9" y="156.05" width="11.0" height="1.850" fill="#424242"/>
<rect x="763.9" y="159.1" width="9.1" height="1.850" fill="#424242"/>
<rect x="763.9" y="162.15" width="12.1" height="1.850" fill="#424242"/>
<rect x="794.1" y="153" width="7.9" height="1.850" fill="#424242"/>
<rect x="791.9" y="156.05" width="12.2" height="1.850" fill="#424242"/>
<rect x="794.1" y="159.1" width="7.9" height="1.850" fill="#424242"/>
<rect x="791.9" y="162.15" width="12.2" height="1.850" fill="#424242"/>
<rect x="825.3" y="153" width="6.7" height="1.850" fill="#424242"/>
<rect x="821" y="156.05" width="11.0" height="1.850" fill="#424242"/>
<rect x="823.2" y="159.1" width="8.8" height="1.850" fill="#424242"/>
<rect x="820" y="162.15" width="12.0" height="1.850" fill="#424242"/>
<rect x="848.100" y="153" width="11.900" height="1.850" fill="#424242"/>
<rect x="848.100" y="156.05" width="11.900" height="1.850" fill="#424242"/>
<rect x="848.100" y="159.1" width="11.900" height="1.850" fill="#424242"/>
<rect x="848.100" y="162.15" width="11.900" height="1.850" fill="#424242"/>
<text x="875.400" y="157.900" font-size="7" font-weight="bold" fill="#424242">1</text><text x="875.400" y="164.800" font-size="7" font-weight="bold" fill="#424242">2</text>
<rect x="881" y="152.9" width="7" height="1.050" fill="#424242"/>
<rect x="881" y="155" width="7" height="1.050" fill="#424242"/>
<rect x="881" y="160" width="7" height="1.050" fill="#424242"/>
<rect x="881" y="162.1" width="7" height="1.050" fill="#424242"/>
<circle cx="906" cy="155" r="1.900" fill="#424242"/><circle cx="906" cy="162.100" r="1.900" fill="#424242"/>
<rect x="910" y="152.9" width="7" height="1.050" fill="#424242"/>
<rect x="910" y="155" width="7" height="1.050" fill="#424242"/>
<rect x="910" y="160" width="7" height="1.050" fill="#424242"/>
<rect x="910" y="162.1" width="7" height="1.050" fill="#424242"/>
<rect x="937.0" y="152" width="1" height="13" fill="#c8c8c8"/><rect x="939.2" y="154" width="5.9" height="1" fill="#c8c8c8"/><rect x="939.2" y="156" width="3.7" height="1" fill="#c8c8c8"/><rect x="939.2" y="158" width="5.9" height="1" fill="#c8c8c8"/><rect x="939.2" y="160" width="3.7" height="1" fill="#c8c8c8"/><rect x="939.2" y="162" width="5.9" height="1" fill="#c8c8c8"/><rect x="932.8" y="154" width="1" height="1" fill="#c8c8c8"/><rect x="934.9" y="154" width="1" height="1" fill="#c8c8c8"/><rect x="932.8" y="162" width="1" height="1" fill="#c8c8c8"/><rect x="934.9" y="162" width="1" height="1" fill="#c8c8c8"/><path d="M936.0 158.500h-4" stroke="#c8c8c8" stroke-width="1"/><path d="M930.7 158.500l2.500-2v4z" fill="#c8c8c8"/>
<rect x="965.0" y="152" width="1" height="13" fill="#424242"/><rect x="967.2" y="154" width="5.9" height="1" fill="#424242"/><rect x="967.2" y="156" width="3.7" height="1" fill="#424242"/><rect x="967.2" y="158" width="5.9" height="1" fill="#424242"/><rect x="967.2" y="160" width="3.7" height="1" fill="#424242"/><rect x="967.2" y="162" width="5.9" height="1" fill="#424242"/><rect x="960.8" y="154" width="1" height="1" fill="#424242"/><rect x="962.9" y="154" width="1" height="1" fill="#424242"/><rect x="960.8" y="162" width="1" height="1" fill="#424242"/><rect x="962.9" y="162" width="1" height="1" fill="#424242"/><path d="M959.1 158.500h4" stroke="#424242" stroke-width="1"/><path d="M964.4 158.500l-2.500-2v4z" fill="#424242"/>
</svg>


<!-- BUTTONS -->
<div class="btn" style="left:1105px;width:92px">Appliquer</div>
<div class="btn" style="left:1202px;width:90px;background:#159bd7;color:#fff">OK</div>
<div class="btn" style="left:1297px;width:90px">Annuler</div>
</div>
</body>
</html>
